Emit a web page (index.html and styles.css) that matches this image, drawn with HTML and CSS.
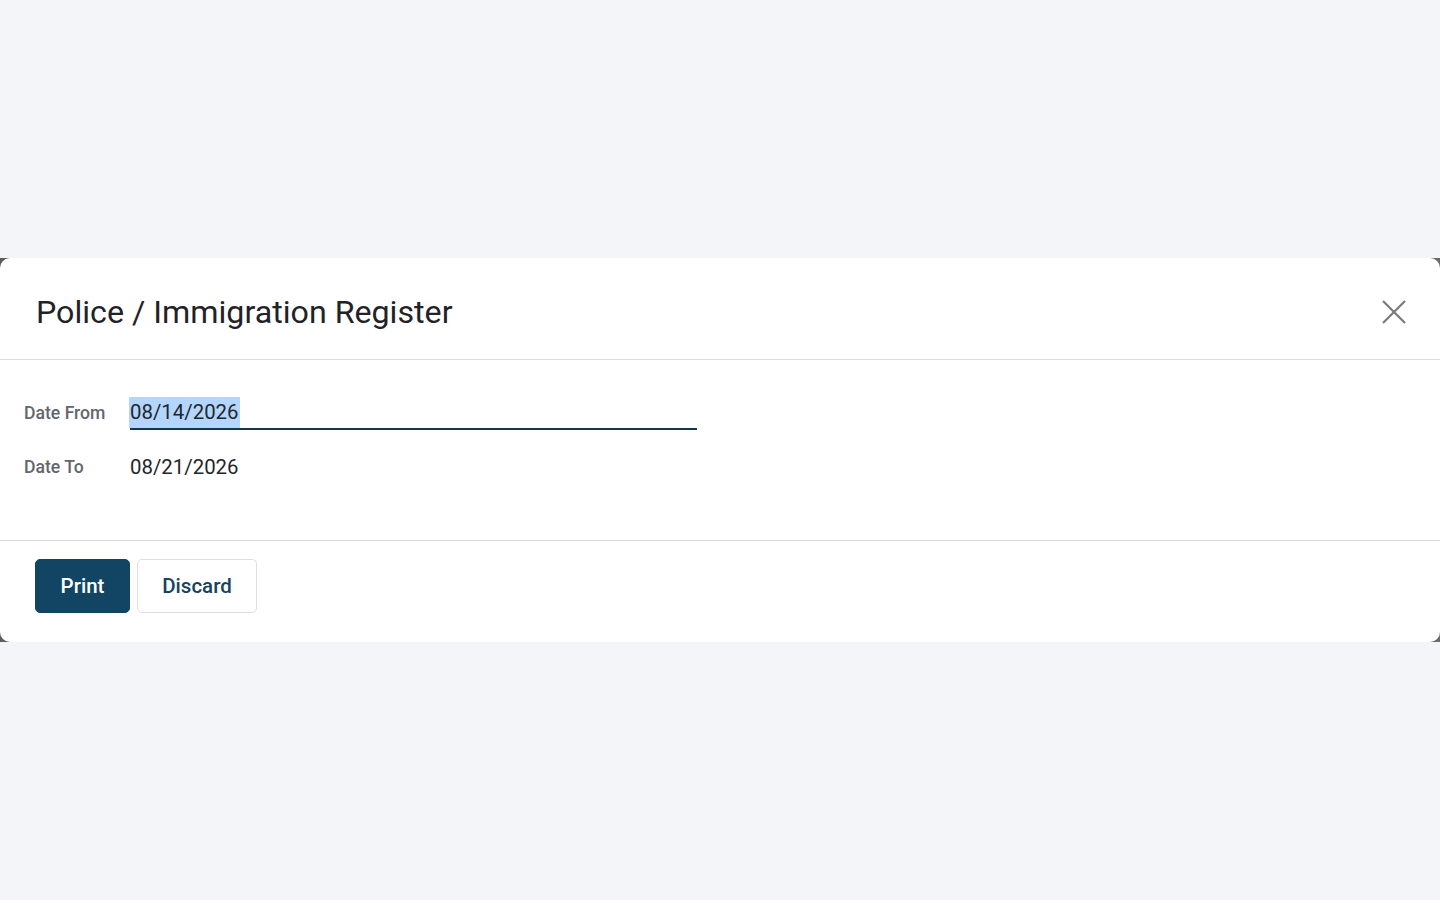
FILE: index.html
```html
<!DOCTYPE html>
<html>
<head>
<meta charset="utf-8">
<link rel="stylesheet" href="styles.css">
</head>
<body>
<div class="backdrop">
  <div class="dialog">
    <header class="dialog-header">
      <h4 class="title">Police / Immigration Register</h4>
      <button class="close" aria-label="Close">
        <svg width="26" height="26" viewBox="0 0 26 26"><path d="M2 2 L24 24 M24 2 L2 24" stroke="#7a7a7a" stroke-width="2.2" fill="none"/></svg>
      </button>
    </header>
    <main class="dialog-body">
      <div class="row">
        <label class="label">Date From</label>
        <div class="field focused"><span class="sel">08/14/2026</span></div>
      </div>
      <div class="row">
        <label class="label">Date To</label>
        <div class="field"><span>08/21/2026</span></div>
      </div>
    </main>
    <footer class="dialog-footer">
      <button class="btn btn-primary">Print</button>
      <button class="btn btn-secondary">Discard</button>
    </footer>
  </div>
</div>
</body>
</html>
```
FILE: styles.css
```css
html, body {
  margin: 0;
  padding: 0;
  background: #f4f5f9;
  font-family: Roboto, "Noto Sans", sans-serif;
}
.backdrop {
  margin-top: 258px;
  background: linear-gradient(90deg, #5d5d5d, #6a6a6a);
}
.dialog {
  background: #fff;
  border-radius: 10px;
  overflow: hidden;
}
.dialog-header {
  height: 102px;
  box-sizing: border-box;
  border-bottom: 1px solid #dcdcdc;
  display: flex;
  align-items: center;
  justify-content: space-between;
  padding: 7px 33px 0 36px;
}
.title {
  margin: 0;
  font-size: 32.2px;
  font-weight: 400;
  color: #1f2328;
}
.close {
  background: none;
  border: none;
  padding: 0;
  width: 26px;
  height: 26px;
  display: flex;
  align-items: center;
  justify-content: center;
}
.dialog-body {
  display: block;
  height: 181px;
  box-sizing: border-box;
  padding: 35px 0 0 24px;
  border-bottom: 1px solid #dcdcdc;
}
.row {
  display: flex;
  align-items: center;
  height: 35px;
  margin-bottom: 19px;
}
.label {
  width: 106px;
  font-size: 17.6px;
  font-weight: 500;
  color: #62666d;
}
.field {
  width: 567px;
  height: 35px;
  box-sizing: border-box;
  display: flex;
  align-items: center;
  font-size: 20.4px;
  color: #22262b;
  padding-top: 1px;
}
.field.focused {
  border-bottom: 2px solid #14354f;
  padding-top: 1px;
}
.sel {
  background: #b4d5fd;
  line-height: 31px;
  padding: 0 1px;
  margin-left: -1px;
}
.dialog-footer {
  height: 101px;
  box-sizing: border-box;
  padding: 18px 0 0 35px;
  display: flex;
  align-items: flex-start;
  gap: 7px;
}
.btn {
  height: 54px;
  font-family: Roboto, "Noto Sans", sans-serif;
  font-size: 20.5px;
  font-weight: 500;
  border-radius: 5px;
  cursor: pointer;
}
.btn-primary {
  width: 95px;
  background: #124563;
  color: #fff;
  border: 1px solid #124563;
}
.btn-secondary {
  width: 120px;
  background: #fff;
  color: #16435f;
  border: 1px solid #dedede;
}
```
